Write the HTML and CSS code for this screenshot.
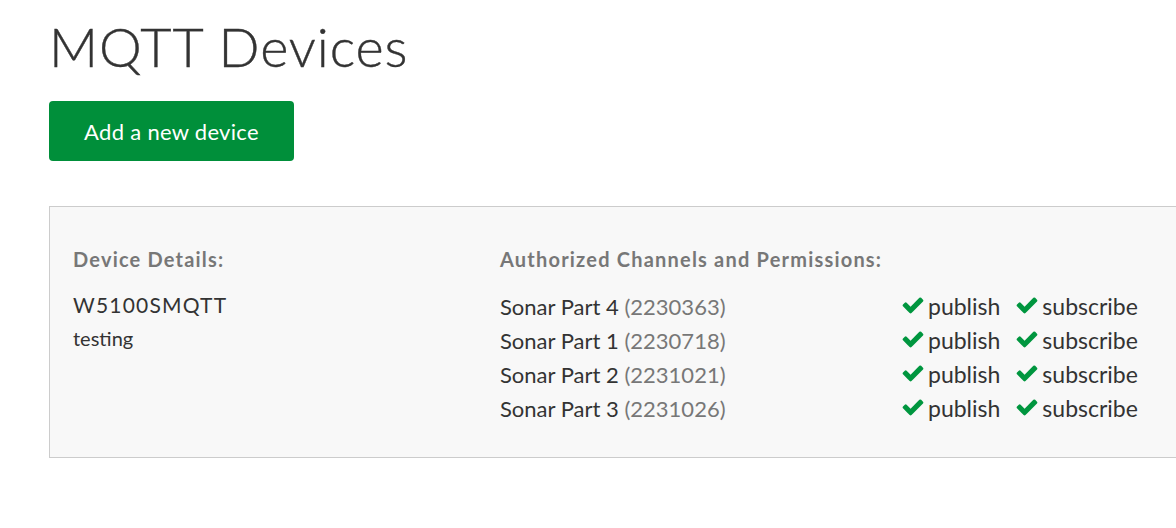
FILE: index.html
```html
<!DOCTYPE html>
<html lang="en">
<head>
    <meta charset="UTF-8">
    <title>MQTT Devices</title>
    <link rel="stylesheet" href="styles.css">
</head>
<body>
    <div class="page">
        <h1 class="title">MQTT Devices</h1>
        <button class="add-btn">Add a new device</button>

        <div class="device">
            <div class="device-info">
                <h4 class="label">Device Details:</h4>
                <div class="device-name">W5100SMQTT</div>
                <div class="device-desc">testing</div>
            </div>
            <div class="device-channels">
                <h4 class="label">Authorized Channels and Permissions:</h4>
                <table class="channels">
                    <tr>
                        <td class="channel">Sonar Part 4 <span class="channel-id">(2230363)</span></td>
                        <td class="perm"><span class="check"></span>publish</td>
                        <td class="perm"><span class="check"></span>subscribe</td>
                    </tr>
                    <tr>
                        <td class="channel">Sonar Part 1 <span class="channel-id">(2230718)</span></td>
                        <td class="perm"><span class="check"></span>publish</td>
                        <td class="perm"><span class="check"></span>subscribe</td>
                    </tr>
                    <tr>
                        <td class="channel">Sonar Part 2 <span class="channel-id">(2231021)</span></td>
                        <td class="perm"><span class="check"></span>publish</td>
                        <td class="perm"><span class="check"></span>subscribe</td>
                    </tr>
                    <tr>
                        <td class="channel">Sonar Part 3 <span class="channel-id">(2231026)</span></td>
                        <td class="perm"><span class="check"></span>publish</td>
                        <td class="perm"><span class="check"></span>subscribe</td>
                    </tr>
                </table>
            </div>
        </div>
    </div>

    <script>
        // same check icon in every permission cell
        const checkSvg = '<svg viewBox="0 0 1792 1792" width="24" height="24"><path fill="#00963f" d="M1671 566q0 40-28 68l-724 724-136 136q-28 28-68 28t-68-28l-136-136-362-362q-28-28-28-68t28-68l136-136q28-28 68-28t68 28l294 295 656-657q28-28 68-28t68 28l136 136q28 28 28 68z"/></svg>';
        document.querySelectorAll('.check').forEach(el => el.innerHTML = checkSvg);
    </script>
</body>
</html>
```

FILE: styles.css
```css
* {
    margin: 0;
    padding: 0;
    box-sizing: border-box;
}

html, body {
    overflow: hidden;
}

body {
    background: #fff;
    font-family: 'Lato', 'Open Sans', sans-serif;
    color: #333;
}

.page {
    width: 1260px;
    padding: 14px 0 0 49px;
}

.title {
    font-family: 'Lato', sans-serif;
    font-weight: 300;
    font-size: 54px;
    line-height: 66px;
    color: #333;
    letter-spacing: 0.9px;
    -webkit-text-stroke: 0.4px #333;
    margin-bottom: 21px;
}

.add-btn {
    display: block;
    width: 245px;
    height: 60px;
    border: none;
    border-radius: 4px;
    background: #008f3a;
    color: #fff;
    font-family: 'Lato', sans-serif;
    font-size: 22px;
    letter-spacing: 0.3px;
    cursor: pointer;
}

.device {
    display: flex;
    margin-top: 45px;
    background: #f8f8f8;
    border: 1px solid #ccc;
    padding: 40px 23px 32px;
    min-height: 252px;
}

.device-info {
    width: 427px;
}

.label {
    font-size: 20px;
    font-weight: 700;
    color: #777;
    letter-spacing: 1.2px;
    margin-bottom: 18px;
}

.device-name {
    font-size: 21px;
    letter-spacing: 1.2px;
    line-height: 32px;
    margin-top: 1px;
}

.device-desc {
    font-size: 20px;
    line-height: 28px;
    margin-top: 3px;
}

.channels {
    border-collapse: collapse;
    font-size: 22px;
}

.channels td {
    height: 34px;
    padding: 0;
    vertical-align: middle;
}

.channel {
    width: 401px;
}

.channel-id {
    color: #777;
}

.perm {
    padding-right: 15px !important;
    white-space: nowrap;
    font-size: 23px;
}

.check {
    display: inline-block;
    vertical-align: -2px;
    margin-right: 3px;
}

.check svg {
    display: block;
}
```
